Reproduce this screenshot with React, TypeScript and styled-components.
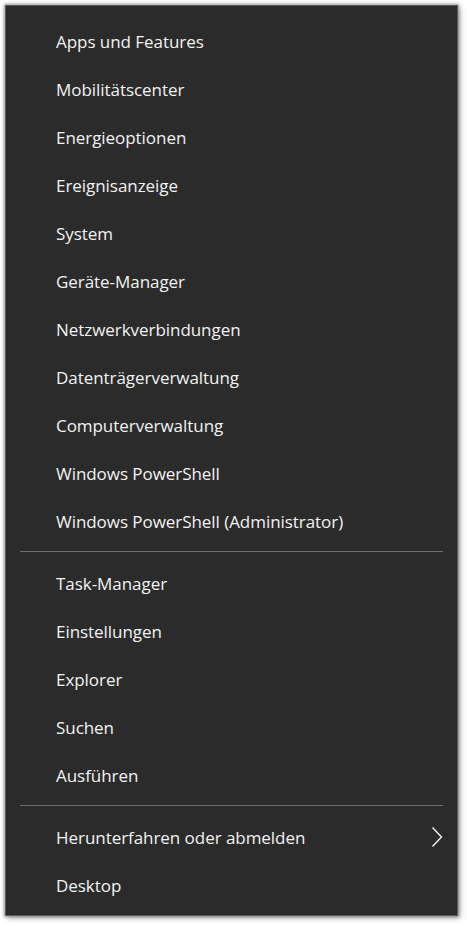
import React from "react";
import styled, { createGlobalStyle } from "styled-components";

const Global = createGlobalStyle`
  html, body { margin: 0; padding: 0; background: #ffffff; }
  body { width: 467px; height: 926px; overflow: hidden; }
`;

const Page = styled.div`
  padding: 5px 9px 10px 5px;
  box-sizing: border-box;
  width: 467px;
  height: 926px;
`;

const Menu = styled.nav`
  width: 453px;
  height: 911px;
  box-sizing: border-box;
  background: #2b2b2b;
  border: 1px solid #5a5a5a;
  box-shadow: 0 0 3px 1px rgba(0, 0, 0, 0.35), 2px 2px 6px rgba(0, 0, 0, 0.3);
  padding: 11px 0 6px 0;
  display: flex;
  flex-direction: column;
  font-family: "Open Sans", "Noto Sans", sans-serif;
`;

const Item = styled.div`
  height: 48px;
  display: flex;
  align-items: center;
  justify-content: space-between;
  padding: 0 14px 0 50px;
  color: #f2f2f2;
  font-size: 17px;
  letter-spacing: -0.05px;
`;

const Separator = styled.div`
  height: 1px;
  background: #6e6e6e;
  margin: 6px 14px 7px 14px;
`;

const Chevron = () => (
  <svg width="12" height="22" viewBox="0 0 12 22" fill="none">
    <path d="M1.5 1.5 L10.5 11 L1.5 20.5" stroke="#f2f2f2" strokeWidth="1.4" />
  </svg>
);

const groups: string[][] = [
  [
    "Apps und Features",
    "Mobilitätscenter",
    "Energieoptionen",
    "Ereignisanzeige",
    "System",
    "Geräte-Manager",
    "Netzwerkverbindungen",
    "Datenträgerverwaltung",
    "Computerverwaltung",
    "Windows PowerShell",
    "Windows PowerShell (Administrator)",
  ],
  ["Task-Manager", "Einstellungen", "Explorer", "Suchen", "Ausführen"],
];

export default function App() {
  return (
    <>
      <Global />
      <Page>
        <Menu>
          {groups.map((g, i) => (
            <React.Fragment key={i}>
              {g.map((t) => (
                <Item key={t}>{t}</Item>
              ))}
              <Separator />
            </React.Fragment>
          ))}
          <Item>
            Herunterfahren oder abmelden
            <Chevron />
          </Item>
          <Item>Desktop</Item>
        </Menu>
      </Page>
    </>
  );
}
